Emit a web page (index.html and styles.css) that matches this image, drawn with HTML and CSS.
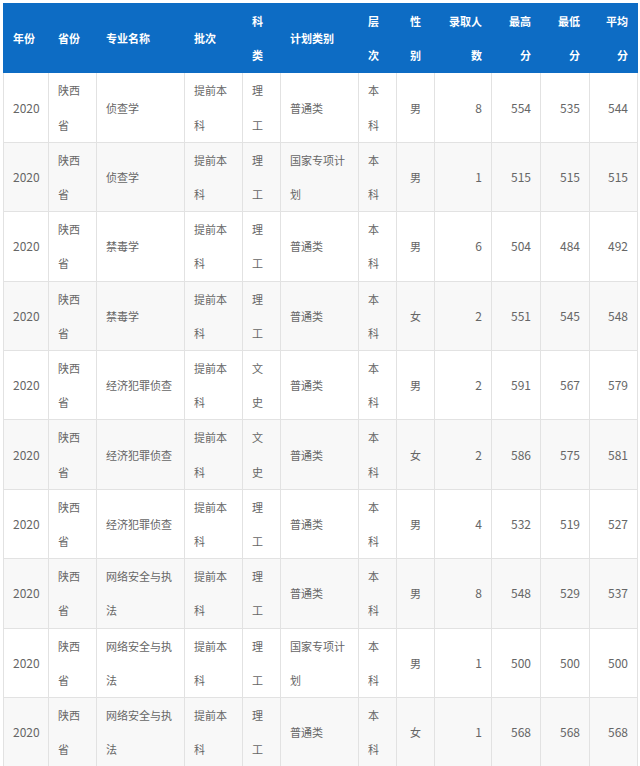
FILE: index.html
```html
<!DOCTYPE html>
<html lang="zh-CN">
<head>
<meta charset="utf-8">
<title>录取分数</title>
<link rel="stylesheet" href="styles.css">
</head>
<body>
<table class="score-table">
  <colgroup>
    <col class="c-year"><col class="c-prov"><col class="c-major"><col class="c-batch"><col class="c-sub">
    <col class="c-plan"><col class="c-level"><col class="c-sex"><col class="c-num"><col class="c-max"><col class="c-min"><col class="c-avg">
  </colgroup>
  <thead>
    <tr>
      <th>年份</th><th>省份</th><th>专业名称</th><th>批次</th><th>科类</th><th>计划类别</th><th>层次</th><th class="sex">性别</th>
      <th class="num">录取人数</th><th class="num">最高分</th><th class="num">最低分</th><th class="num">平均分</th>
    </tr>
  </thead>
  <tbody>
    <tr><td class="year">2020</td><td>陕西省</td><td>侦查学</td><td>提前本科</td><td>理工</td><td>普通类</td><td>本科</td><td class="sex">男</td><td class="num">8</td><td class="num">554</td><td class="num">535</td><td class="num">544</td></tr>
    <tr><td class="year">2020</td><td>陕西省</td><td>侦查学</td><td>提前本科</td><td>理工</td><td>国家专项计划</td><td>本科</td><td class="sex">男</td><td class="num">1</td><td class="num">515</td><td class="num">515</td><td class="num">515</td></tr>
    <tr><td class="year">2020</td><td>陕西省</td><td>禁毒学</td><td>提前本科</td><td>理工</td><td>普通类</td><td>本科</td><td class="sex">男</td><td class="num">6</td><td class="num">504</td><td class="num">484</td><td class="num">492</td></tr>
    <tr><td class="year">2020</td><td>陕西省</td><td>禁毒学</td><td>提前本科</td><td>理工</td><td>普通类</td><td>本科</td><td class="sex">女</td><td class="num">2</td><td class="num">551</td><td class="num">545</td><td class="num">548</td></tr>
    <tr><td class="year">2020</td><td>陕西省</td><td>经济犯罪侦查</td><td>提前本科</td><td>文史</td><td>普通类</td><td>本科</td><td class="sex">男</td><td class="num">2</td><td class="num">591</td><td class="num">567</td><td class="num">579</td></tr>
    <tr><td class="year">2020</td><td>陕西省</td><td>经济犯罪侦查</td><td>提前本科</td><td>文史</td><td>普通类</td><td>本科</td><td class="sex">女</td><td class="num">2</td><td class="num">586</td><td class="num">575</td><td class="num">581</td></tr>
    <tr><td class="year">2020</td><td>陕西省</td><td>经济犯罪侦查</td><td>提前本科</td><td>理工</td><td>普通类</td><td>本科</td><td class="sex">男</td><td class="num">4</td><td class="num">532</td><td class="num">519</td><td class="num">527</td></tr>
    <tr><td class="year">2020</td><td>陕西省</td><td>网络安全与执法</td><td>提前本科</td><td>理工</td><td>普通类</td><td>本科</td><td class="sex">男</td><td class="num">8</td><td class="num">548</td><td class="num">529</td><td class="num">537</td></tr>
    <tr><td class="year">2020</td><td>陕西省</td><td>网络安全与执法</td><td>提前本科</td><td>理工</td><td>国家专项计划</td><td>本科</td><td class="sex">男</td><td class="num">1</td><td class="num">500</td><td class="num">500</td><td class="num">500</td></tr>
    <tr><td class="year">2020</td><td>陕西省</td><td>网络安全与执法</td><td>提前本科</td><td>理工</td><td>普通类</td><td>本科</td><td class="sex">女</td><td class="num">1</td><td class="num">568</td><td class="num">568</td><td class="num">568</td></tr>
  </tbody>
</table>
</body>
</html>
```

FILE: styles.css
```css
html, body {
  margin: 0;
  padding: 0;
  background: #ffffff;
}

body {
  padding: 3px;
  font-family: "Noto Sans CJK SC", "Noto Sans", sans-serif;
}

.score-table {
  width: 635px;
  table-layout: fixed;
  border-collapse: collapse;
  font-size: 11px;
  color: #666666;
}

.c-year { width: 45px; }
.c-prov { width: 48px; }
.c-major { width: 88px; }
.c-batch { width: 58px; }
.c-sub { width: 38px; }
.c-plan { width: 78px; }
.c-level { width: 38px; }
.c-sex { width: 38px; }
.c-num { width: 57px; }
.c-max { width: 49px; }
.c-min { width: 49px; }
.c-avg { width: 48px; }

.score-table th,
.score-table td {
  padding: 0 9px;
  line-height: 34.2px;
  text-align: left;
  vertical-align: middle;
  word-break: break-all;
}

.score-table th {
  background: #0d6cc4;
  color: #ffffff;
  font-weight: bold;
  border: 1px solid #0d6cc4;
}

.score-table td {
  border: 1px solid #e2e2e2;
}

.score-table tbody tr:nth-child(even) td {
  background: #f8f8f8;
}

.score-table .num {
  text-align: right;
}

.score-table .sex {
  text-align: center;
}

.score-table td.num,
.score-table td.year {
  font-size: 12px;
}

.score-table td.year {
  white-space: nowrap;
  padding-right: 0;
}
```
